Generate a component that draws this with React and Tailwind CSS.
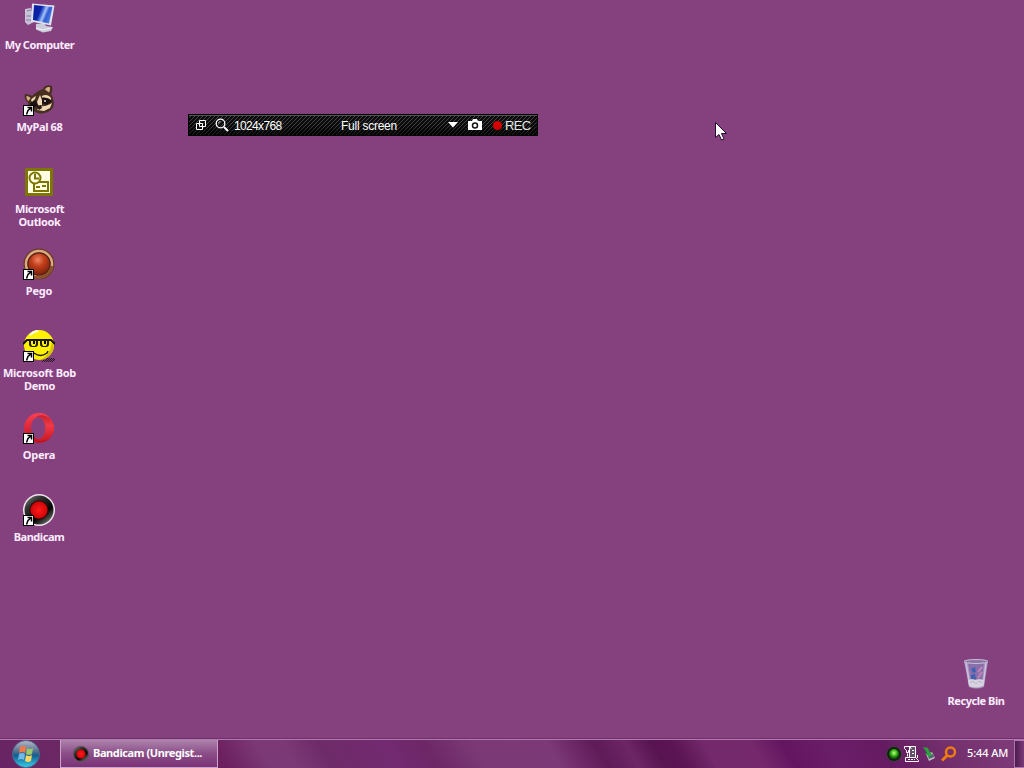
import React from "react";

const ShortcutArrow = () => (
  <g>
    <rect x="0" y="21" width="11" height="11" fill="#000" />
    <rect x="1" y="22" width="9" height="9" fill="#fff" />
    <path d="M4.500 23.500h4v4M8 24L5 26.500 3.500 30.500" stroke="#000" strokeWidth="1.500" fill="none" />
  </g>
);

const ComputerIcon = () => (
  <svg width="32" height="32" viewBox="0 0 32 32">
    <defs>
      <linearGradient id="screen" x1="0" y1="0" x2="1" y2="0.400">
        <stop offset="0" stopColor="#1b49c4" />
        <stop offset="0.150" stopColor="#0a1fa0" />
        <stop offset="0.420" stopColor="#0d24a6" />
        <stop offset="0.550" stopColor="#4a72dc" />
        <stop offset="0.650" stopColor="#a9c4f2" />
        <stop offset="0.800" stopColor="#2f5cd4" />
        <stop offset="1" stopColor="#4a7be0" />
      </linearGradient>
    </defs>
    <path d="M2 7l6-1 3 14-6 3-3-3z" fill="#c9c3da" />
    <path d="M4 9l4-1M3.500 14h5M3 18h6" stroke="#857a9c" />
    <path d="M13 22l8-1 2 3 7 1-2 4-8 1.500-7-3z" fill="#cbcbdc" />
    <path d="M13 26l7 2 8-2" stroke="#f3f3fa" fill="none" />
    <path d="M9 1.500l22.500 2-3.500 20-20-4z" fill="#dfe3ef" />
    <path d="M11 3l18.500 2-3.500 16.500-16-3.500z" fill="url(#screen)" />
  </svg>
);

const RaccoonIcon = () => (
  <svg width="32" height="32" viewBox="0 0 32 32">
    <path d="M20 5c1-3 5-5 9-3 1 3 0 6-1 8 3 5 4 11 1 15-5 5-14 6-18 2C6 25 5 21 5 18 2 17 1 13 2 10c3 0 6 1 7 2 3-3 7-6 11-7z" fill="#47301f" />
    <path d="M22 5.500c1-2 3-3 5-2 0 2 0 3-1 5zM3.500 12c2 0 3 1 4 2l-2 3c-2-1-2-3-2-5z" fill="#d9ae87" />
    <path d="M8 16c1-2 3-3 5-4l-1 3-3 3zM19 12c3-2 7-1 9 2v2c-3-2-7-3-9-2z" fill="#eed7ae" />
    <path d="M18 14c4-1 8 0 11 3l-5 4-6-2zM7 19l6-3 2 6-7 2z" fill="#1d1211" />
    <path d="M14 18l3-7 2 5v5l-3 2zM17 22c5 1 8-1 12-3l-2 5-6 3-7-1z" fill="#f1d8b6" />
    <path d="M13 22l5-1 1 3-3 2z" fill="#29191a" />
    <circle cx="22" cy="17" r="0.900" fill="#fff" />
    <ShortcutArrow />
  </svg>
);

const OutlookIcon = () => (
  <svg width="32" height="32" viewBox="0 0 32 32">
    <rect x="2" y="2" width="28" height="28" fill="#7e7400" />
    <rect x="5" y="5" width="22" height="22" fill="#fffde2" />
    <g fill="none" stroke="#7e7400" strokeWidth="2">
      <rect x="11" y="16" width="14" height="9" fill="#fffde2" />
      <path d="M13 21h4M19 20h4" />
      <circle cx="12" cy="12" r="5.500" fill="#fffde2" />
      <path d="M12 8v4.500h4" />
    </g>
  </svg>
);

const PegoIcon = () => (
  <svg width="32" height="32" viewBox="0 0 32 32">
    <defs>
      <radialGradient id="pego" cx="0.450" cy="0.300" r="0.700">
        <stop offset="0" stopColor="#ef8564" />
        <stop offset="0.450" stopColor="#c13d19" />
        <stop offset="1" stopColor="#7d240d" />
      </radialGradient>
    </defs>
    <circle cx="16" cy="16" r="15.500" fill="#6b3a24" />
    <circle cx="16" cy="16" r="13" fill="none" stroke="#d9a980" strokeWidth="2.500" />
    <path d="M5 25A14 14 0 0 0 29 18" stroke="#8d512d" strokeWidth="3" fill="none" />
    <circle cx="16" cy="16" r="11.500" fill="#572014" />
    <circle cx="16" cy="16" r="10.500" fill="url(#pego)" />
    <ShortcutArrow />
  </svg>
);

const BobIcon = () => (
  <svg width="32" height="32" viewBox="0 0 32 32">
    <path d="M24 28.500h8M20 30.500h12" stroke="#21151f" strokeDasharray="1 1" />
    <path d="M23 29.500h9M19 31.500h12" stroke="#21151f" strokeDasharray="1 1" />
    <circle cx="16" cy="15" r="15" fill="#fff200" />
    <path d="M29 8a15 15 0 0 1-12 22c8-4 12-10 12-22z" fill="#d3c308" />
    <path d="M7 5l4-3 4-1" stroke="#fff" strokeWidth="2" fill="none" />
    <path d="M0 14l4-4h24l4 4" stroke="#151204" strokeWidth="2" fill="none" />
    <path d="M6 10h9v4q0 3-3 3H9q-3 0-3-3zM17 10h9v4q0 3-3 3h-3q-3 0-3-3z" fill="#211d04" />
    <path d="M8 11h5v3l-1 2H9l-1-2zM19 11h5v3l-1 2h-3l-1-2z" fill="#fff200" />
    <path d="M11 11v3M22 11v3" stroke="#000" strokeWidth="2" />
    <path d="M11 23c4 3 9 3 13 0l1-2" stroke="#221d00" strokeWidth="1.500" fill="none" />
    <ShortcutArrow />
  </svg>
);

const OperaIcon = () => (
  <svg width="32" height="32" viewBox="0 0 32 32">
    <defs>
      <linearGradient id="opera" x1="0" y1="0" x2="0" y2="1">
        <stop offset="0" stopColor="#fb4052" />
        <stop offset="1" stopColor="#bd101c" />
      </linearGradient>
      <linearGradient id="operaRight" x1="0" y1="0" x2="0" y2="1">
        <stop offset="0" stopColor="#c8202e" />
        <stop offset="0.400" stopColor="#f03a46" />
        <stop offset="1" stopColor="#c91a26" />
      </linearGradient>
    </defs>
    <path
      fillRule="evenodd"
      d="M16 1a15 15 0 1 0 0 30 15 15 0 0 0 0-30zM15.500 5c4.500 0 7 5 7 11s-2.500 11-7 11-7.500-5-7.500-11 3-11 7.500-11z"
      fill="url(#opera)"
    />
    <path d="M13 5c7-5 18 1 18 11S20 32 13 27c6 1 9.500-5 9.500-11S19 4 13 5z" fill="url(#operaRight)" />
    <ShortcutArrow />
  </svg>
);

const BandicamIcon = () => (
  <svg width="32" height="32" viewBox="0 0 32 32">
    <defs>
      <linearGradient id="discRim" x1="0" y1="0" x2="0.800" y2="1">
        <stop offset="0" stopColor="#8d9189" />
        <stop offset="0.300" stopColor="#30332f" />
        <stop offset="0.700" stopColor="#050505" />
        <stop offset="1" stopColor="#73796f" />
      </linearGradient>
      <radialGradient id="discRed">
        <stop offset="0" stopColor="#ff1a1a" />
        <stop offset="1" stopColor="#cf0508" />
      </radialGradient>
    </defs>
    <circle cx="16" cy="16" r="16" fill="#f0e3ee" />
    <circle cx="16" cy="16" r="14.500" fill="url(#discRim)" />
    <circle cx="16" cy="16" r="9.500" fill="#3b0507" />
    <circle cx="16" cy="16" r="8.500" fill="url(#discRed)" />
    <ShortcutArrow />
  </svg>
);

const RecycleBinIcon = () => (
  <svg width="32" height="32" viewBox="0 0 32 32">
    <path d="M4 3h24l-4 26q-8 3-15 0z" fill="#a791bd" />
    <path d="M6 5l4 23M26 5l-3 23" stroke="#cbc0de" strokeWidth="1.500" />
    <path d="M8 5h16l-2 18H11z" fill="#8a70aa" />
    <path d="M11 11l4-2 1 5-3 1zM11 17l4-1 1 5h-5z" fill="#3e62b2" />
    <path d="M18 14l4-5M18 20l4-6" stroke="#cf86bd" strokeWidth="1.500" />
    <path d="M8 22l4-1 3 1 4-1 5 1-1 6q-7 3-14 0z" fill="#d6d3df" />
    <path d="M10 25l3-2 3 3 3-3 3 2" stroke="#b7b0c6" fill="none" />
    <ellipse cx="16" cy="3.500" rx="12" ry="2" fill="#8d76a6" stroke="#c9bbd8" />
  </svg>
);

const shortcuts = [
  { label: "My Computer", icon: <ComputerIcon />, labelClass: "w-20 pl-px tracking-[-0.45px]" },
  { label: "MyPal 68", icon: <RaccoonIcon />, labelClass: "w-20 pl-px tracking-[-0.35px]" },
  { label: "Microsoft Outlook", icon: <OutlookIcon />, labelClass: "w-16 pl-px tracking-[-0.35px]" },
  { label: "Pego", icon: <PegoIcon />, labelClass: "w-20 tracking-[-0.2px]" },
  { label: "Microsoft Bob Demo", icon: <BobIcon />, labelClass: "w-20 pl-px tracking-[-0.25px]" },
  { label: "Opera", icon: <OperaIcon />, labelClass: "w-20 tracking-[-0.2px]" },
  { label: "Bandicam", icon: <BandicamIcon />, labelClass: "w-20 tracking-[-0.45px]" },
];

const DesktopIcon = ({ label, icon, labelClass }) => (
  <div className="flex h-[82px] w-20 flex-col items-center">
    {icon}
    <span
      className={`mt-[4px] text-center text-[11px] leading-[13px] font-bold text-[#fcecff] ${labelClass}`}
    >
      {label}
    </span>
  </div>
);

const RecorderBar = () => (
  <div className="absolute top-[114px] left-[188px] flex h-[22px] w-[350px] items-center border border-black bg-[linear-gradient(135deg,#0c0c0c_25%,#484848_25%,#484848_37.5%,#0c0c0c_37.5%,#0c0c0c_75%,#484848_75%,#484848_87.5%,#0c0c0c_87.5%)] bg-size-[4px_4px] text-xs text-white shadow-[inset_0_1px_0_#555,inset_0_-6px_6px_#0009]">
    <svg className="ml-[6px]" width="12" height="12" viewBox="0 0 12 12" fill="none" stroke="#fff">
      <path d="M4.500 1.500h6v6h-6zM1.500 4.500h6v6h-6z" />
    </svg>
    <svg className="ml-[8px]" width="14" height="14" viewBox="0 0 14 14" fill="none" stroke="#fff">
      <circle cx="5.500" cy="5.500" r="4.300" strokeWidth="1.300" />
      <path d="M3.500 5.500q0-2 2-2" strokeWidth="0.700" />
      <path d="M9 9l4 4" strokeWidth="2" />
    </svg>
    <span className="mt-[2px] ml-[5px] w-[107px] font-['Liberation_Sans'] tracking-[-0.65px]">1024x768</span>
    <span className="mt-[2px] w-[107px] font-['Liberation_Sans'] tracking-[-0.25px]">Full screen</span>
    <svg width="10" height="6" viewBox="0 0 10 6">
      <path d="M0 0h10L5 5.500z" fill="#fff" />
    </svg>
    <svg className="ml-[10px]" width="14" height="12" viewBox="0 0 14 12">
      <path d="M0 2h4l1-2h4l1 2h4v9H0z" fill="#fff" />
      <circle cx="7" cy="6.500" r="2.500" fill="#fff" stroke="#151515" strokeWidth="1.500" />
    </svg>
    <span className="ml-[11px] h-[9px] w-[9px] rounded-full bg-[#d50000]" />
    <span className="mt-[2px] ml-[3px] font-['Liberation_Sans'] text-[13px] tracking-[-0.6px] text-[#e6e6e6]">REC</span>
  </div>
);

const StartOrb = () => (
  <svg width="28" height="28" viewBox="0 0 28 28">
    <defs>
      <linearGradient id="orb" x1="0" y1="0" x2="0" y2="1">
        <stop offset="0" stopColor="#b9b9ca" />
        <stop offset="0.400" stopColor="#56708f" />
        <stop offset="0.550" stopColor="#145c8f" />
        <stop offset="1" stopColor="#36d2ed" />
      </linearGradient>
    </defs>
    <circle cx="14" cy="14" r="13.500" fill="url(#orb)" stroke="#486988" />
    <path d="M8 7q3-2 6 0l-1 6q-3-2-6 0z" fill="#ee794a" />
    <path d="M15 8q3 2 6 0l-1 6q-3 2-6 0z" fill="#9bc66a" />
    <path d="M7 14q3-2 6 0l-1 6q-3-2-6 0z" fill="#71b9e9" />
    <path d="M14 15q3 2 6 0l-1 6q-3 2-6 0z" fill="#f8d462" />
  </svg>
);

const Tray = () => (
  <div className="flex h-full items-center">
    <svg className="mb-px" width="16" height="16" viewBox="0 0 16 16">
      <defs>
        <radialGradient id="led" cx="0.500" cy="0.400">
          <stop offset="0" stopColor="#c8ff91" />
          <stop offset="0.500" stopColor="#44c51c" />
          <stop offset="1" stopColor="#116008" />
        </radialGradient>
      </defs>
      <circle cx="8" cy="8" r="7.500" fill="#171d17" stroke="#3d443b" />
      <circle cx="8" cy="8" r="5" fill="url(#led)" />
    </svg>
    <svg className="mb-px ml-[2px]" width="16" height="16" viewBox="0 0 16 16" fill="none" stroke="#fff">
      <path d="M5.500.500h6v11h-6z" fill="#665068" />
      <path d="M.5.500h5l2 2M.5.500v2l2 2v2h2v-2l2-2M8 4.500h2M8 7.500h2M3.500 7.500v3M1.500 11.500h10l3 3v1h-13zM13.500 9v3" />
      <path d="M4 13.500h7" strokeDasharray="2 1" />
    </svg>
    <svg className="mb-px ml-[2px]" width="16" height="16" viewBox="0 0 16 16">
      <path d="M4 8l6-2 3 6-6 3z" fill="#b9c2c2" />
      <path d="M6 10l5-2 1 3-5 2z" fill="#536268" />
      <path d="M1 1l5 1 2 5 2-1-2 5-5-3 2-1-2-3z" fill="#28a43a" />
    </svg>
    <svg className="mb-px ml-[3px]" width="16" height="16" viewBox="0 0 16 16" fill="none" stroke="#f27c0c">
      <circle cx="9.500" cy="6" r="4.500" strokeWidth="2.500" />
      <path d="M6 9.500l-5 5" strokeWidth="3" />
    </svg>
    <span className="mb-px ml-[10px] w-[47px] text-[11px] font-medium tracking-[-0.1px] text-white">5:44 AM</span>
    <div className="h-full w-[10px] border border-r-0 border-[#b073aa] bg-linear-to-r from-[#4b1c50] to-[#7b3b79]" />
  </div>
);

const Taskbar = () => (
  <div className="flex h-[30px] items-stretch justify-between border-t border-[#6f3069] bg-[linear-gradient(60deg,#672363_0%,#6b2864_6%,#6c205f_21%,#6d205f_22%,#7b3976_26%,#7b3976_28.5%,#6e2b69_32%,#732a71_38.5%,#6d2767_42%,#7b3a76_47%,#7c3977_54%,#5f1a58_58.5%,#6c2666_61.5%,#581351_64%,#5b1454_66%,#73296b_69%,#75296c_73.5%,#641560_76.5%,#6b1e68_81%,#651a61_86%,#73306d_92%,#803d7b_100%)]">
    <div className="flex w-full items-stretch justify-between border-t border-[#b57bb0]">
      <div className="flex">
        <div className="flex w-[60px] items-start pl-[12px]">
          <StartOrb />
        </div>
        <div className="flex w-[158px] items-center border border-t-0 border-[#cba2c9] bg-linear-to-b from-[#ad83ac] via-[#8b4e88] to-[#7a3275] pl-[12px]">
          <svg width="16" height="16" viewBox="0 0 32 32">
            <circle cx="16" cy="16" r="16" fill="#5d4c59" />
            <circle cx="16" cy="16" r="14" fill="url(#discRim)" />
            <circle cx="16" cy="16" r="9" fill="url(#discRed)" />
          </svg>
          <span className="ml-[4px] text-[11px] font-bold tracking-[-0.4px] whitespace-nowrap text-white">
            Bandicam (Unregist...
          </span>
        </div>
      </div>
      <Tray />
    </div>
  </div>
);

const App = () => {
  return (
    <div className="relative flex h-[768px] w-[1024px] cursor-default flex-col overflow-hidden bg-[#85417e] font-['Noto_Sans','Open_Sans',sans-serif] select-none">
      <div className="flex flex-1 items-end justify-between">
        <div className="-ml-px flex h-full flex-col pt-[2px]">
          {shortcuts.map((item) => (
            <DesktopIcon key={item.label} {...item} />
          ))}
        </div>
        <div className="mr-[8px] -mb-[2px]">
          <DesktopIcon label="Recycle Bin" icon={<RecycleBinIcon />} labelClass="w-20 tracking-[-0.45px]" />
        </div>
      </div>

      <Taskbar />

      <RecorderBar />

      {/* Mouse pointer */}
      <svg className="absolute top-[122px] left-[715px]" width="12" height="19" viewBox="0 0 12 19">
        <path d="M.5.500v15l3.500-3 2.500 5.500 2.500-1-2.500-5.500h5z" fill="#fff" stroke="#24102c" />
      </svg>
    </div>
  );
};

export default App;
